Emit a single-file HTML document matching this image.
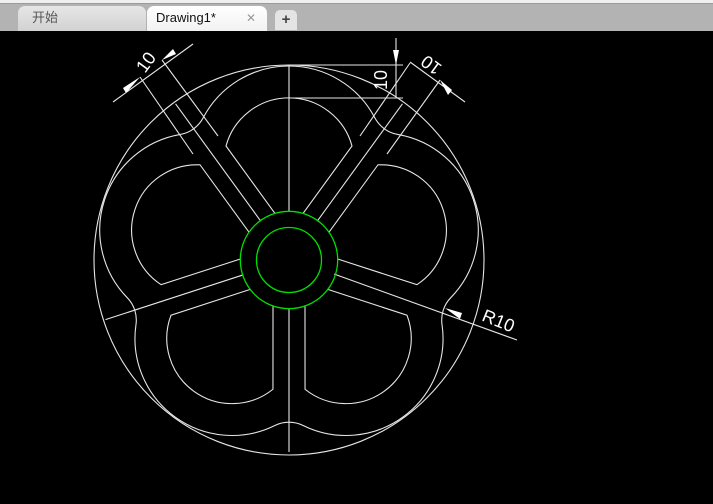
<!DOCTYPE html>
<html><head><meta charset="utf-8"><style>
html,body{margin:0;padding:0;background:#000;width:713px;height:504px;overflow:hidden}
#bar{position:absolute;left:0;top:0;width:713px;height:31px;background:#b3b3b3}
#strip{position:absolute;left:0;top:0;width:713px;height:3px;background:#f0f0f0;border-bottom:1px solid #9a9a9a}
.tab{position:absolute;top:6px;height:25px;border-radius:7px 7px 0 0;font:13px "Liberation Sans","Noto Sans CJK SC",sans-serif;line-height:24px}
</style></head><body>
<div id="bar"><div id="strip"></div>
<div class="tab" style="left:18px;width:128px;background:linear-gradient(#e6e6e6,#d2d2d2);color:#555"><span style="margin-left:14px">开始</span></div>
<div class="tab" style="left:147px;width:120px;background:linear-gradient(#fff,#f2f2f2);color:#111"><span style="margin-left:9px">Drawing1*</span><span style="position:absolute;left:99px;color:#999;font-size:12px">✕</span></div>
<div class="tab" style="left:275px;top:10px;width:22px;height:20px;background:#e4e4e4;border-radius:5px 5px 0 0;text-align:center;line-height:19px;font-weight:bold;color:#444;font-size:15px">+</div>
</div>
<svg width="713" height="504" style="position:absolute;left:0;top:0" xmlns="http://www.w3.org/2000/svg">
<g fill="none" stroke="#e6e6e6" stroke-width="1.1">
<circle cx="289" cy="260" r="195"/>
<path d="M450.76,297.69 A32,32 0 0 0 442.02,324.58 A97,97 0 0 1 303.14,425.49 A32,32 0 0 0 274.86,425.49 A97,97 0 0 1 135.98,324.58 A32,32 0 0 0 127.24,297.69 A97,97 0 0 1 180.30,134.42 A32,32 0 0 0 203.18,117.80 A97,97 0 0 1 374.82,117.80 A32,32 0 0 0 397.70,134.42 A97,97 0 0 1 450.76,297.69 Z"/>
<g transform="translate(289,260)">
<g id="c"><path d="M-14.3,-46.9 L-63,-114 A65.3,65.3 0 0 1 63,-114 L14.3,-46.9"/></g>
<use href="#c" transform="rotate(72)"/>
<use href="#c" transform="rotate(144)"/>
<use href="#c" transform="rotate(216)"/>
<use href="#c" transform="rotate(288)"/>
<line x1="0" y1="-48" x2="0" y2="-195"/>
<line x1="0" y1="48" x2="0" y2="192"/>
<g transform="rotate(162)"><line x1="48" y1="0" x2="193" y2="0"/></g>
<g transform="rotate(234)"><line x1="48" y1="0" x2="193" y2="0"/></g>
<g transform="rotate(306)"><line x1="48" y1="0" x2="193" y2="0"/></g>
</g>
<line x1="334" y1="274" x2="517" y2="340"/>
<!-- upper-left dim -->
<line x1="140" y1="77" x2="193" y2="154"/>
<line x1="162" y1="60" x2="218" y2="136"/>
<line x1="113" y1="102" x2="193" y2="44"/>
<!-- upper-right dim -->
<line x1="387" y1="154" x2="440" y2="80"/>
<line x1="360" y1="136" x2="410" y2="63"/>
<line x1="410" y1="62" x2="465" y2="102"/>
<!-- vertical dim -->
<line x1="289" y1="65" x2="403" y2="65"/>
<line x1="289" y1="98" x2="403" y2="98"/>
<line x1="396" y1="38" x2="396" y2="98"/>
</g>
<g fill="#fff">
<polygon points="140,77 126,93 123,88"/>
<polygon points="162,60 176,54 173,49"/>
<polygon points="396,65 393,50 399,50"/>
<polygon points="440,80 452,90 448,95"/>
<polygon points="445,308 462,313 460,319"/>
</g>
<g fill="#fff" font-family="Liberation Sans,sans-serif" font-size="18">
<text transform="translate(147,63) rotate(-54)" text-anchor="middle" dominant-baseline="middle">10</text>
<text transform="translate(432,64) rotate(216)" text-anchor="middle" dominant-baseline="middle">10</text>
<text transform="translate(382,80) rotate(-90)" text-anchor="middle" dominant-baseline="middle">10</text>
<text transform="translate(498,322) rotate(22)" text-anchor="middle" dominant-baseline="middle">R10</text>
</g>
<g fill="none" stroke="#00e000" stroke-width="1.3">
<circle cx="289" cy="260" r="48.7"/>
<circle cx="289" cy="260" r="32.5"/>
</g>
</svg>
</body></html>
